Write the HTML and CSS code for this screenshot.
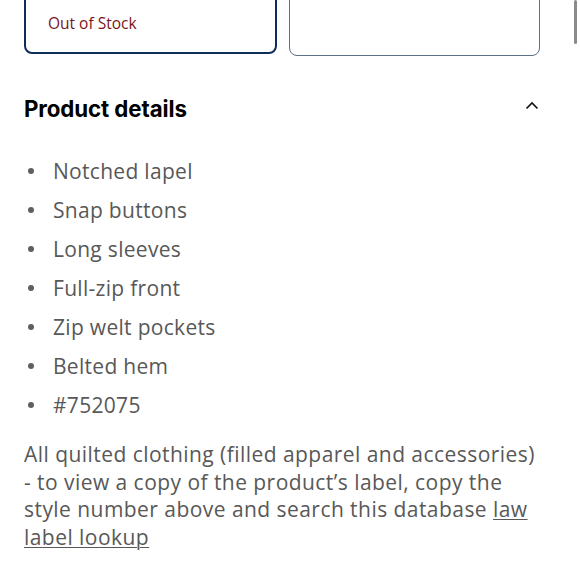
FILE: index.html
```html
<!DOCTYPE html>
<html>
<head>
<meta charset="utf-8">
<link rel="stylesheet" href="styles.css">
</head>
<body>
<div class="page">
  <div class="cards">
    <div class="card card-selected"><span class="stock">Out of Stock</span></div>
    <div class="card"></div>
  </div>
  <section class="details">
    <div class="details-head">
      <h2 class="details-title">Product details</h2>
      <svg class="chev" width="14" height="9" viewBox="0 0 14 9"><path d="M1.5 7.5 L7 2 L12.5 7.5" fill="none" stroke="#111" stroke-width="1.6"/></svg>
    </div>
    <ul class="features">
      <li>Notched lapel</li>
      <li>Snap buttons</li>
      <li>Long sleeves</li>
      <li>Full-zip front</li>
      <li>Zip welt pockets</li>
      <li>Belted hem</li>
      <li>#752075</li>
    </ul>
    <p class="note">All quilted clothing (filled apparel and accessories) - to view a copy of the product’s label, copy the style number above and search this database <a href="#" class="link">law label lookup</a></p>
  </section>
</div>
<div class="scrollbar"></div>
</body>
</html>
```
FILE: styles.css
```css
html, body { margin: 0; padding: 0; background: #fff; }
body { font-family: "Open Sans", "Liberation Sans", sans-serif; overflow: hidden; height: 580px; }
.page { padding: 0 40px 0 24px; }
.cards { display: flex; gap: 11px; margin-top: -28px; }
.card {
  flex: 1;
  height: 82px;
  border: 1.5px solid #5b6f86;
  border-radius: 8px;
  box-sizing: border-box;
  display: flex;
  align-items: flex-end;
  padding: 0 0 19px 22px;
  margin-top: 2px;
}
.card-selected { border: 2.5px solid #0d2f57; margin-top: 0; height: 82px; margin-right: 1px; }
.stock { color: #7a1417; font-size: 15.5px; line-height: 20px; font-family: "Open Sans", sans-serif; }
.details-head { display: flex; justify-content: space-between; align-items: center; margin-top: 37px; height: 30px; }
.details-title { margin: 0; font-size: 22.3px; font-weight: 700; color: #000; font-family: "Inter", "Open Sans", sans-serif; letter-spacing: -0.1px; }
.chev { margin-right: 1px; margin-top: -5px; }
.features { list-style: none; margin: 34px 0 0 0; padding: 0; }
.features li { position: relative; padding-left: 29px; height: 39px; line-height: 28px; font-size: 21px; letter-spacing: 0.3px; color: #585858; }
.features li::before { content: ""; position: absolute; left: 4px; top: 11px; width: 6px; height: 6px; border-radius: 50%; background: #5f5f5f; }
.note { margin: 11px 0 0 0; font-size: 21px; letter-spacing: 0.45px; line-height: 27.5px; color: #585858; }
.link { color: #585858; text-decoration: underline; text-underline-offset: 2px; text-decoration-thickness: 1px; }
.scrollbar { position: absolute; right: 3px; top: 0; width: 3px; height: 44px; border-radius: 2px; background: #8a8a8a; }
```
